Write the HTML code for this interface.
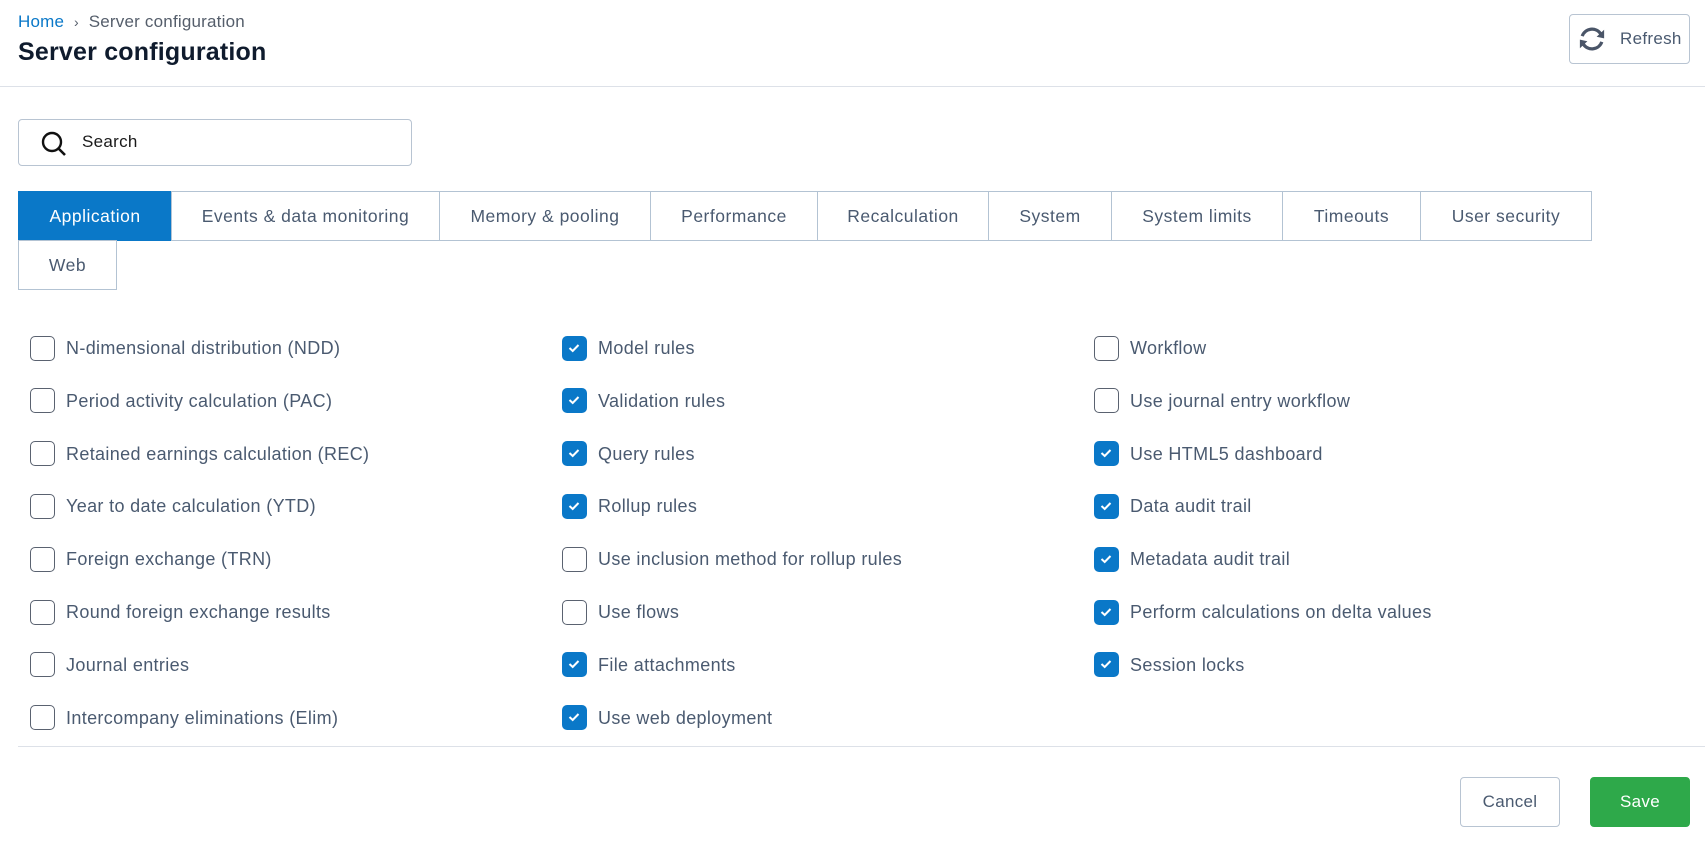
<!DOCTYPE html>
<html><head><style>
*{box-sizing:border-box;margin:0;padding:0}
body{width:1705px;height:841px;background:#fff;font-family:"Liberation Sans",sans-serif;position:relative;overflow:hidden;color:#4a5568}
.a{position:absolute}
.bc{left:18px;top:12px;font-size:17px;color:#555e6b;letter-spacing:.2px}
.bc span.h{color:#0a78c8}
.title{left:18px;top:38px;font-size:25px;font-weight:bold;color:#0f1b2d;letter-spacing:.2px}
.hr{left:0;width:1705px;height:1px;background:#dde1e8}
.btn{border:1px solid #b8c4d2;border-radius:4px;display:flex;align-items:center;justify-content:center;font-size:17px;color:#4a5a70;background:#fff;letter-spacing:.3px}
.search{left:18px;top:119px;width:394px;height:47px;border:1px solid #b8c4d2;border-radius:4px}
.tab{position:absolute;top:191px;height:50px;border:1px solid #b3c3d3;display:flex;align-items:center;justify-content:center;font-size:17.5px;letter-spacing:.5px;color:#4a5a70;background:#fff}
.cb{position:absolute;width:25px;height:25px;border:1.5px solid #5a6270;border-radius:5px;background:#fff}
.cb.on{background:#0a78c8;border-color:#0a78c8}
.lb{position:absolute;font-size:18px;letter-spacing:.35px;color:#4a5a70;white-space:nowrap}
</style></head><body>
<div class="a bc"><span class="h">Home</span>&nbsp;&nbsp;<span style="font-size:14px">&#8250;</span>&nbsp;&nbsp;Server configuration</div>
<div class="a title">Server configuration</div>
<div class="a btn" style="left:1569px;top:14px;width:121px;height:50px;justify-content:flex-start;padding-left:7px">
<svg width="30" height="30" viewBox="0 0 26 26" style="margin-right:13px"><path d="M4.5 10.5 A9 9 0 0 1 20.5 8.5" fill="none" stroke="#4a5568" stroke-width="2.8"/><path d="M21.5 15.5 A9 9 0 0 1 5.5 17.5" fill="none" stroke="#4a5568" stroke-width="2.8"/><path d="M23.5 5 L23.5 12.5 L17 11 Z" fill="#4a5568"/><path d="M2.5 21 L2.5 13.5 L9 15 Z" fill="#4a5568"/></svg>Refresh</div>
<div class="a hr" style="top:86px"></div>
<div class="a search"><svg class="a" style="left:22px;top:11px" width="26" height="26" viewBox="0 0 26 26"><circle cx="11" cy="11" r="9" fill="none" stroke="#111" stroke-width="2.4"/><path d="M17.5 17.5 L24 24" stroke="#111" stroke-width="2.6"/></svg><div class="a" style="left:63px;top:12px;font-size:17px;color:#1a1a1a;letter-spacing:.3px">Search</div></div>
<div class="tab" style="left:18px;width:154px;background:#0a78c8;border-color:#0a78c8;color:#fff">Application</div>
<div class="tab" style="left:171px;width:269px">Events &amp; data monitoring</div>
<div class="tab" style="left:439px;width:212px">Memory &amp; pooling</div>
<div class="tab" style="left:650px;width:168px">Performance</div>
<div class="tab" style="left:817px;width:172px">Recalculation</div>
<div class="tab" style="left:988px;width:124px">System</div>
<div class="tab" style="left:1111px;width:172px">System limits</div>
<div class="tab" style="left:1282px;width:139px">Timeouts</div>
<div class="tab" style="left:1420px;width:172px">User security</div>
<div class="tab" style="left:18px;top:240px;width:99px">Web</div>
<div id="cbs"></div>
<div class="a hr" style="top:746px;left:18px;width:1687px"></div>
<div class="a btn" style="left:1460px;top:777px;width:100px;height:50px">Cancel</div>
<div class="a btn" style="left:1590px;top:777px;width:100px;height:50px;background:#2ea94a;border-color:#2ea94a;color:#fff">Save</div>
<script>
var cols=[[30,66],[562,598],[1094,1130]];
var data=[
[["N-dimensional distribution (NDD)",0],["Period activity calculation (PAC)",0],["Retained earnings calculation (REC)",0],["Year to date calculation (YTD)",0],["Foreign exchange (TRN)",0],["Round foreign exchange results",0],["Journal entries",0],["Intercompany eliminations (Elim)",0]],
[["Model rules",1],["Validation rules",1],["Query rules",1],["Rollup rules",1],["Use inclusion method for rollup rules",0],["Use flows",0],["File attachments",1],["Use web deployment",1]],
[["Workflow",0],["Use journal entry workflow",0],["Use HTML5 dashboard",1],["Data audit trail",1],["Metadata audit trail",1],["Perform calculations on delta values",1],["Session locks",1]]];
var h="";
data.forEach(function(c,i){c.forEach(function(it,j){var cy=348+j*52.8;
h+='<div class="cb'+(it[1]?' on':'')+'" style="left:'+cols[i][0]+'px;top:'+(cy-12.5)+'px">'+(it[1]?'<svg width="22" height="22" viewBox="0 0 22 22" style="position:absolute;left:0;top:0"><path d="M6.5 11 L9.7 14 L15.5 8" fill="none" stroke="#fff" stroke-width="2"/></svg>':'')+'</div>';
h+='<div class="lb" style="left:'+cols[i][1]+'px;top:'+(cy-10)+'px">'+it[0]+'</div>';});});
document.getElementById("cbs").innerHTML=h;
</script>
</body></html>
